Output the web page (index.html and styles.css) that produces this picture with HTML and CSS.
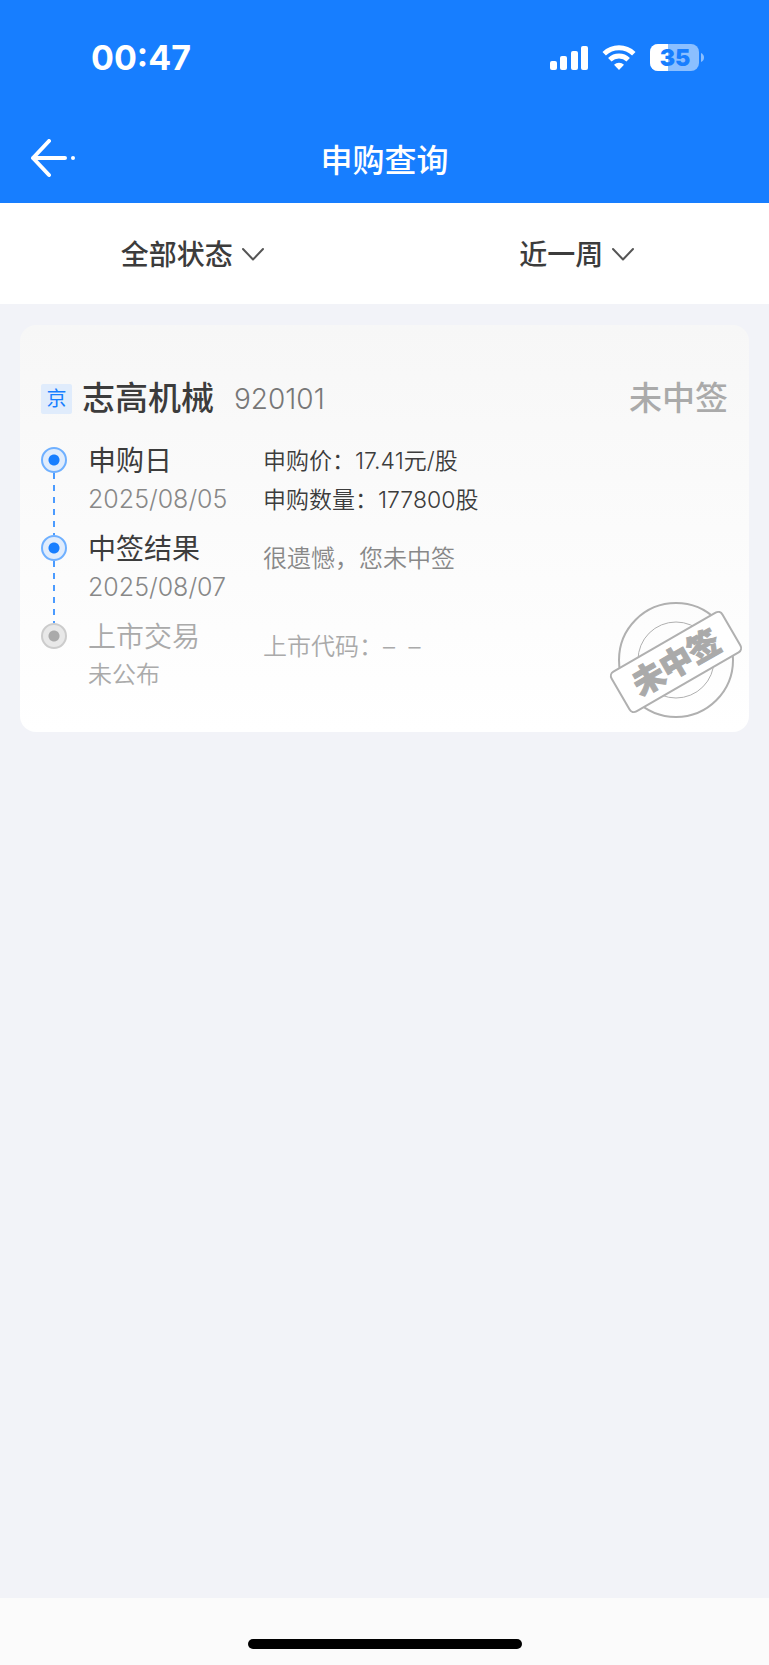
FILE: index.html
```html
<!DOCTYPE html>
<html lang="zh-CN">
<head>
  <meta charset="UTF-8" />
  <meta name="viewport" content="width=device-width, initial-scale=1.0"/>
  <title>申购查询</title>
  <link rel="stylesheet" href="styles.css">
</head>
<body>
  <header class="header">
    <!-- 状态栏 -->
    <div class="status-bar">
      <span class="time">00:47</span>
      <div class="status-icons">
        <svg class="signal" width="38" height="26" viewBox="0 0 38 26" fill="#fff" aria-hidden="true">
          <rect x="0" y="16" width="7" height="9" rx="2"/>
          <rect x="10" y="11" width="7" height="14" rx="2"/>
          <rect x="21" y="6" width="7" height="19" rx="2"/>
          <rect x="31" y="1" width="7" height="24" rx="2"/>
        </svg>
        <svg class="wifi" width="34" height="26" viewBox="0 0 34 26" aria-hidden="true">
          <g fill="none" stroke="#fff" stroke-width="5">
            <path d="M2.2 8.700a21.5 21.5 0 0 1 29.6 0"/>
            <path d="M7.8 14.700a13.4 13.4 0 0 1 18.4 0"/>
          </g>
          <path d="M17 25l-5-5.2a7.2 7.2 0 0 1 10 0z" fill="#fff"/>
        </svg>
        <svg class="battery" width="54" height="28" viewBox="0 0 54 28" role="img" aria-label="电量 35%">
          <clipPath id="level"><rect width="18" height="28"/></clipPath>
          <rect x="0" y="0" width="49" height="27" rx="8" fill="#8bbfff"/>
          <rect x="0" y="0" width="49" height="27" rx="8" fill="#fff" clip-path="url(#level)"/>
          <path d="M51 9q3 1.500 3 4.500t-3 4.500z" fill="#8bbfff"/>
          <text class="battery-text" x="25" y="22" text-anchor="middle">35</text>
        </svg>
      </div>
    </div>
    <!-- 导航栏 -->
    <nav class="nav">
      <button class="back" type="button" aria-label="返回">
        <svg width="46" height="40" viewBox="0 0 46 40" fill="none" stroke="#fff" stroke-width="4" stroke-linecap="round" stroke-linejoin="round">
          <path d="M19 2L3 19l16 17M3 19h32"/>
          <circle cx="43" cy="19" r="2" fill="#fff" stroke="none"/>
        </svg>
      </button>
      <h1>申购查询</h1>
    </nav>
  </header>

  <!-- 筛选 -->
  <div class="filters">
    <div class="filter">
      <select id="status" aria-label="状态">
        <option>全部状态</option>
        <option>已中签</option>
        <option>未中签</option>
      </select>
      <svg width="22" height="14" viewBox="0 0 22 14" fill="none" stroke="#555" stroke-width="2" stroke-linecap="round" stroke-linejoin="round" aria-hidden="true"><path d="M1 2l10 10.500L21 2"/></svg>
    </div>
    <div class="filter">
      <select id="period" aria-label="时间">
        <option>近一周</option>
        <option>近一月</option>
        <option>近三月</option>
      </select>
      <svg width="22" height="14" viewBox="0 0 22 14" fill="none" stroke="#555" stroke-width="2" stroke-linecap="round" stroke-linejoin="round" aria-hidden="true"><path d="M1 2l10 10.500L21 2"/></svg>
    </div>
  </div>

  <main class="content">
    <section class="card">
      <div class="card-head">
        <span class="market">京</span>
        <h2>志高机械</h2>
        <span class="code">920101</span>
        <span class="result">未中签</span>
      </div>

      <ol class="steps">
        <li class="step">
          <span class="marker"></span>
          <div class="stage">
            <h3>申购日</h3>
            <p>2025/08/05</p>
          </div>
          <div class="detail">
            <p>申购价：17.41元/股</p>
            <p>申购数量：177800股</p>
          </div>
        </li>
        <li class="step">
          <span class="marker"></span>
          <div class="stage">
            <h3>中签结果</h3>
            <p>2025/08/07</p>
          </div>
          <p class="note">很遗憾，您未中签</p>
        </li>
        <li class="step pending">
          <span class="marker"></span>
          <div class="stage">
            <h3>上市交易</h3>
            <p>未公布</p>
          </div>
          <p class="note">上市代码：–&nbsp; –</p>
        </li>
      </ol>

      <!-- 印章 -->
      <svg class="stamp" width="136" height="118" viewBox="0 0 136 118" role="img" aria-label="未中签">
        <g fill="none" stroke="#b0b0b0">
          <circle cx="68" cy="58" r="57" stroke-width="2"/>
          <circle cx="68" cy="58" r="38" stroke-width="1"/>
        </g>
        <g transform="rotate(-30 68 60)">
          <rect x="4" y="37" width="128" height="46" rx="5" fill="#fff" stroke="#b0b0b0" stroke-width="2"/>
          <text class="stamp-text" x="68" y="72" text-anchor="middle">未中签</text>
        </g>
      </svg>
    </section>
  </main>

  <footer class="home-bar">
    <span class="home-indicator"></span>
  </footer>
</body>
</html>
```
FILE: styles.css
```css
*, *::before, *::after {
  box-sizing: border-box;
}

body {
  display: flex;
  flex-direction: column;
  min-height: 100vh;
  margin: 0;
  font-family: Inter, 'Noto Sans CJK SC', sans-serif;
  color: #3c3c3c;
  background: #f2f3f8;
}

h1, h2, h3, p, ol {
  margin: 0;
  padding: 0;
}

.header {
  color: #fff;
  background: #177eff;
}

.status-bar {
  display: flex;
  align-items: center;
  justify-content: space-between;
  height: 115px;
  padding: 0 65px 0 91px;
}

.time {
  font-size: 34px;
  font-weight: 700;
}

.status-icons {
  display: flex;
  align-items: center;
  gap: 14px;
}

.battery-text {
  font-size: 23px;
  font-weight: 900;
  fill: #177eff;
}

.nav {
  display: grid;
  grid-template-columns: 1fr auto 1fr;
  align-items: center;
  height: 88px;
  padding: 0 30px;
}

.back {
  display: flex;
  justify-self: start;
  padding: 0;
  border: none;
  background: none;
  cursor: pointer;
}

h1 {
  padding-top: 4px;
  font-size: 32px;
  font-weight: 500;
  line-height: 48px;
}

.filters {
  display: grid;
  grid-template-columns: 1fr 1fr;
  height: 101px;
  background: #fff;
}

.filter {
  display: flex;
  align-items: center;
  justify-content: center;
  gap: 9px;
}

.filter select {
  padding: 2px 0 0;
  border: none;
  background: none;
  font: inherit;
  font-size: 28px;
  font-weight: 500;
  color: inherit;
  appearance: none;
  field-sizing: content;
  cursor: pointer;
}

.content {
  flex: 1;
  padding: 21px 20px;
}

.card {
  position: relative;
  padding: 50px 21px 21px;
  border-radius: 16px;
  background: linear-gradient(#f7f7f7, #fff);
}

.card-head {
  display: flex;
  align-items: center;
  height: 48px;
  margin-bottom: 24px;
}

.market {
  width: 31px;
  margin-right: 10px;
  border-radius: 2px;
  font-size: 20px;
  line-height: 30px;
  text-align: center;
  color: #177eff;
  background: #e0ecfc;
}

h2 {
  margin-right: 20px;
  font-size: 33px;
  font-weight: 500;
  line-height: 44px;
}

.code {
  font-size: 28px;
  font-weight: 300;
  line-height: 44px;
  color: #777;
}

.result {
  margin-left: auto;
  font-size: 33px;
  font-weight: 500;
  line-height: 44px;
  color: #aaa;
}

h2, .result {
  padding-bottom: 2px;
}

.steps {
  list-style: none;
}

.step {
  display: grid;
  grid-template-columns: 26px 154px 1fr;
  column-gap: 21px;
  min-height: 88px;
}

/* 时间轴圆点和虚线 */
.marker {
  display: flex;
  flex-direction: column;
  align-items: center;
}

.marker::before {
  content: '';
  width: 26px;
  height: 26px;
  border: 2px solid #6fb0ff;
  border-radius: 50%;
  background: radial-gradient(circle, #177eff 5px, #e0ecfc 6px);
}

.marker::after {
  content: '';
  flex: 1;
  width: 2px;
  background: repeating-linear-gradient(#4b9bff 0 6px, transparent 6px 12px);
}

.stage h3 {
  padding-top: 1px;
  font-size: 28px;
  font-weight: 400;
  line-height: 26px;
}

.stage p {
  margin-top: 7px;
  font-size: 25px;
  font-weight: 350;
  line-height: 36px;
  color: #888;
}

.detail {
  font-size: 23px;
  font-weight: 350;
  line-height: 26px;
}

.detail p {
  padding-top: 1px;
}

.detail p + p {
  margin-top: 7px;
  line-height: 36px;
}

.note {
  font-size: 24px;
  font-weight: 350;
  line-height: 48px;
  color: #888;
}

.pending h3,
.pending .stage p,
.pending .note {
  color: #aaa;
}

.pending h3 {
  font-weight: 350;
}

.pending .stage p {
  font-size: 24px;
}

.pending .marker::before {
  border-color: #ccc;
  background: radial-gradient(circle, #aaa 5px, #e8e8e8 6px);
}

.pending .marker::after {
  background: none;
}

.stamp {
  position: absolute;
  right: 5px;
  bottom: 14px;
  overflow: visible;
}

.stamp {
  bottom: 12px;
}

.stamp-text {
  font-size: 32px;
  font-weight: 900;
  fill: #aaa;
  stroke: #aaa;
  stroke-width: 1px;
}

.home-bar {
  display: flex;
  justify-content: center;
  align-items: flex-end;
  height: 67px;
  padding-bottom: 16px;
  background: #fbfbfb;
}

.home-indicator {
  width: 274px;
  height: 10px;
  border-radius: 5px;
  background: #000;
}
```
